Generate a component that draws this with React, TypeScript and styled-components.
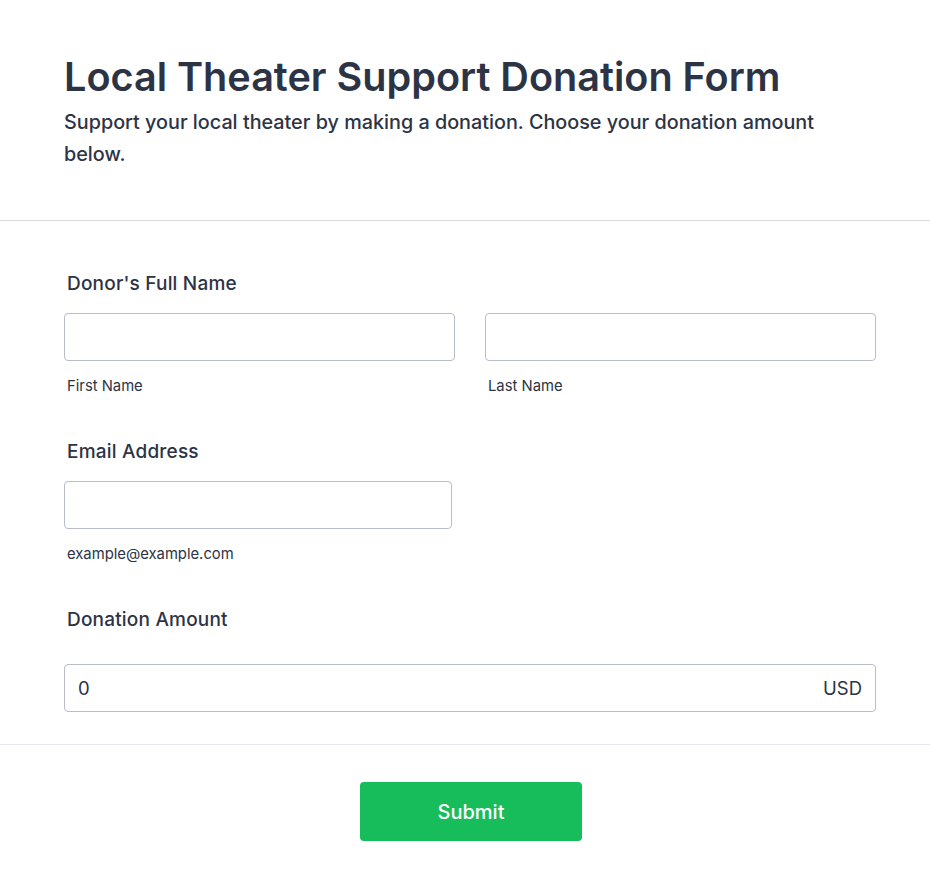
import React, { useState } from "react";
import styled, { createGlobalStyle } from "styled-components";

const GlobalStyle = createGlobalStyle`
  body {
    margin: 0;
    background: #ffffff;
    font-family: Inter, "Noto Sans", sans-serif;
    color: #2c3345;
  }
  * {
    box-sizing: border-box;
  }
`;

const Page = styled.div`
  width: 100%;
  min-height: 890px;
  background: #ffffff;
`;

const Header = styled.header`
  padding: 53px 64px 50px;
  border-bottom: 1px solid #d8dae3;
`;

const Title = styled.h1`
  margin: 0;
  font-size: 39.6px;
  line-height: 48px;
  font-weight: 600;
  color: #2c3345;
`;

const Description = styled.p`
  margin: 5px 0 0;
  font-size: 19.8px;
  line-height: 32px;
  font-weight: 500;
  max-width: 775px;
  color: #2c3345;
`;

const FormBody = styled.form`
  padding: 51px 54px 0 64px;
`;

const Field = styled.div<{ $last?: boolean }>`
  display: flex;
  flex-direction: column;
  padding-bottom: ${({ $last }) => ($last ? "32px" : "45px")};
`;

const Label = styled.label<{ $gap?: number }>`
  display: block;
  padding-left: 3px;
  font-size: 19px;
  line-height: 24px;
  font-weight: 500;
  letter-spacing: 0.2px;
  color: #2c3345;
  margin-bottom: ${({ $gap }) => $gap ?? 17}px;
`;

const Row = styled.div`
  display: grid;
  grid-template-columns: 1fr 1fr;
  column-gap: 30px;
`;

const Cell = styled.div<{ $width?: number }>`
  display: flex;
  flex-direction: column;
  width: ${({ $width }) => ($width ? `${$width}px` : "auto")};
`;

const Input = styled.input`
  height: 48px;
  width: 100%;
  border: 1px solid #b8bdc9;
  border-radius: 4px;
  padding: 0 13px;
  font-family: inherit;
  font-size: 18px;
  color: #2c3345;
  background: #ffffff;
  outline: none;
`;

const SubLabel = styled.span`
  margin-top: 16px;
  padding-left: 3px;
  font-size: 14.8px;
  line-height: 18px;
  color: #2c3345;
`;

const AmountBox = styled.div`
  display: flex;
  align-items: center;
  height: 48px;
  border: 1px solid #b8bdc9;
  border-radius: 4px;
  padding: 0 13px;
`;

const AmountInput = styled.input`
  flex: 1;
  border: none;
  outline: none;
  padding: 0;
  font-family: inherit;
  font-size: 18.5px;
  color: #2c3345;
  background: transparent;
`;

const Currency = styled.span`
  font-size: 18.5px;
  color: #2c3345;
`;

const Footer = styled.div`
  display: flex;
  justify-content: center;
  border-top: 1px solid #e6e7ee;
  padding: 37px 0 48px 12px;
`;

const SubmitButton = styled.button`
  width: 222px;
  height: 59px;
  border: none;
  border-radius: 4px;
  background: #18bd5b;
  color: #ffffff;
  font-family: inherit;
  font-size: 20px;
  font-weight: 500;
  cursor: pointer;
`;

const App: React.FC = () => {
  const [form, setForm] = useState({
    first: "",
    last: "",
    email: "",
    amount: "0",
  });

  const onUpdateField = (e: React.ChangeEvent<HTMLInputElement>) => {
    setForm({ ...form, [e.target.name]: e.target.value });
  };

  return (
    <Page>
      <GlobalStyle />
      <Header>
        <Title>Local Theater Support Donation Form</Title>
        <Description>
          Support your local theater by making a donation. Choose your donation
          amount below.
        </Description>
      </Header>
      <FormBody onSubmit={(e) => e.preventDefault()}>
        <Field>
          <Label>Donor's Full Name</Label>
          <Row>
            <Cell>
              <Input name="first" value={form.first} onChange={onUpdateField} />
              <SubLabel>First Name</SubLabel>
            </Cell>
            <Cell>
              <Input name="last" value={form.last} onChange={onUpdateField} />
              <SubLabel>Last Name</SubLabel>
            </Cell>
          </Row>
        </Field>
        <Field>
          <Label>Email Address</Label>
          <Cell $width={388}>
            <Input
              name="email"
              type="email"
              value={form.email}
              onChange={onUpdateField}
            />
            <SubLabel>example@example.com</SubLabel>
          </Cell>
        </Field>
        <Field $last>
          <Label $gap={32}>Donation Amount</Label>
          <AmountBox>
            <AmountInput
              name="amount"
              value={form.amount}
              onChange={onUpdateField}
            />
            <Currency>USD</Currency>
          </AmountBox>
        </Field>
      </FormBody>
      <Footer>
        <SubmitButton>Submit</SubmitButton>
      </Footer>
    </Page>
  );
};

export default App;
